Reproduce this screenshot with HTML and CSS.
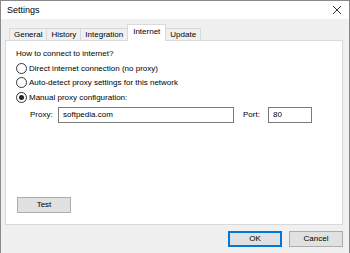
FILE: index.html
```html
<!DOCTYPE html>
<html lang="en">
<head>
  <meta charset="UTF-8" />
  <title>Settings</title>
  <link rel="stylesheet" href="styles.css">
</head>
<body>
  <div class="window">
    <div class="titlebar">
      <span class="title">Settings</span>
      <svg class="close" width="10" height="10" viewBox="0 0 10 10">
        <path d="M1 1L9 9M9 1L1 9" stroke="#333" stroke-width="1" fill="none"/>
      </svg>
    </div>

    <div class="client">
      <div class="tabs">
        <div class="tab">General</div>
        <div class="tab">History</div>
        <div class="tab">Integration</div>
        <div class="tab active">Internet</div>
        <div class="tab">Update</div>
      </div>

      <div class="panel">
        <div class="question">How to connect to internet?</div>

        <label class="radio"><span class="dot"></span>Direct internet connection (no proxy)</label>
        <label class="radio"><span class="dot"></span>Auto-detect proxy settings for this network</label>
        <label class="radio"><span class="dot checked"></span>Manual proxy configuration:</label>

        <div class="proxy-row">
          <span class="field-label">Proxy:</span>
          <div class="input proxy-input">softpedia.com</div>
          <span class="field-label port-label">Port:</span>
          <div class="input port-input">80</div>
        </div>

        <div class="btn test-btn">Test</div>
      </div>

      <div class="footer-buttons">
        <div class="btn default">OK</div>
        <div class="btn">Cancel</div>
      </div>
    </div>
  </div>
</body>
</html>
```

FILE: styles.css
```css
* {
  box-sizing: border-box;
  margin: 0;
  padding: 0;
}

body {
  width: 350px;
  height: 253px;
  font-family: "Liberation Sans", Arial, sans-serif;
  font-size: 8px;
  color: #000;
  background: #fff;
}

.window {
  width: 350px;
  height: 253px;
  border: 1px solid #8a8a8a;
  display: flex;
  flex-direction: column;
}

.titlebar {
  height: 18px;
  background: #fff;
  display: flex;
  align-items: center;
  justify-content: space-between;
  padding: 0 7px 0 6px;
  flex-shrink: 0;
}

.title {
  font-size: 9px;
}

.client {
  flex: 1;
  background: #f0f0f0;
  display: flex;
  flex-direction: column;
  padding: 5px 6px 6px 4px;
}

.tabs {
  display: flex;
  align-items: flex-end;
  padding-left: 4px;
  height: 16px;
  position: relative;
  z-index: 1;
}

.tab {
  height: 12px;
  line-height: 11px;
  padding: 0 4px;
  border: 1px solid #d9d9d9;
  border-bottom: none;
  border-right: none;
  background: #f0f0f0;
}

.tab:last-child {
  border-right: 1px solid #d9d9d9;
}

.tab.active {
  height: 17px;
  line-height: 14px;
  background: #fff;
  margin-bottom: -1px;
  padding: 0 5px;
  border-right: 1px solid #d9d9d9;
}

.tab.active + .tab {
  border-left: none;
}

.panel {
  height: 185px;
  background: #fff;
  border: 1px solid #d9d9d9;
  display: flex;
  flex-direction: column;
  padding: 7px 10px 11px 10px;
}

.question {
  height: 11px;
  line-height: 11px;
  margin-bottom: 2px;
}

.radio {
  display: flex;
  align-items: center;
  height: 14.5px;
}

.dot {
  width: 11px;
  height: 11px;
  border: 1px solid #333;
  border-radius: 50%;
  margin-right: 2px;
  display: flex;
  align-items: center;
  justify-content: center;
}

.dot.checked::after {
  content: '';
  width: 5px;
  height: 5px;
  border-radius: 50%;
  background: #222;
}

.proxy-row {
  display: flex;
  align-items: center;
  padding-left: 14px;
  margin-top: 2px;
}

.field-label {
  width: 28px;
}

.input {
  height: 16px;
  line-height: 14px;
  border: 1px solid #7a7a7a;
  padding: 0 4px;
  background: #fff;
}

.proxy-input {
  width: 176px;
}

.port-label {
  width: 25px;
  margin-left: 9px;
}

.port-input {
  width: 44px;
}

.btn {
  width: 54px;
  height: 16px;
  line-height: 14px;
  text-align: center;
  background: #e1e1e1;
  border: 1px solid #adadad;
}

.test-btn {
  margin-top: auto;
  margin-left: 1px;
}

.footer-buttons {
  display: flex;
  justify-content: flex-end;
  gap: 7px;
  margin-top: 6px;
}

.btn.default {
  border-color: #0078d7;
  box-shadow: inset 0 0 0 1px #0078d7;
}
```
